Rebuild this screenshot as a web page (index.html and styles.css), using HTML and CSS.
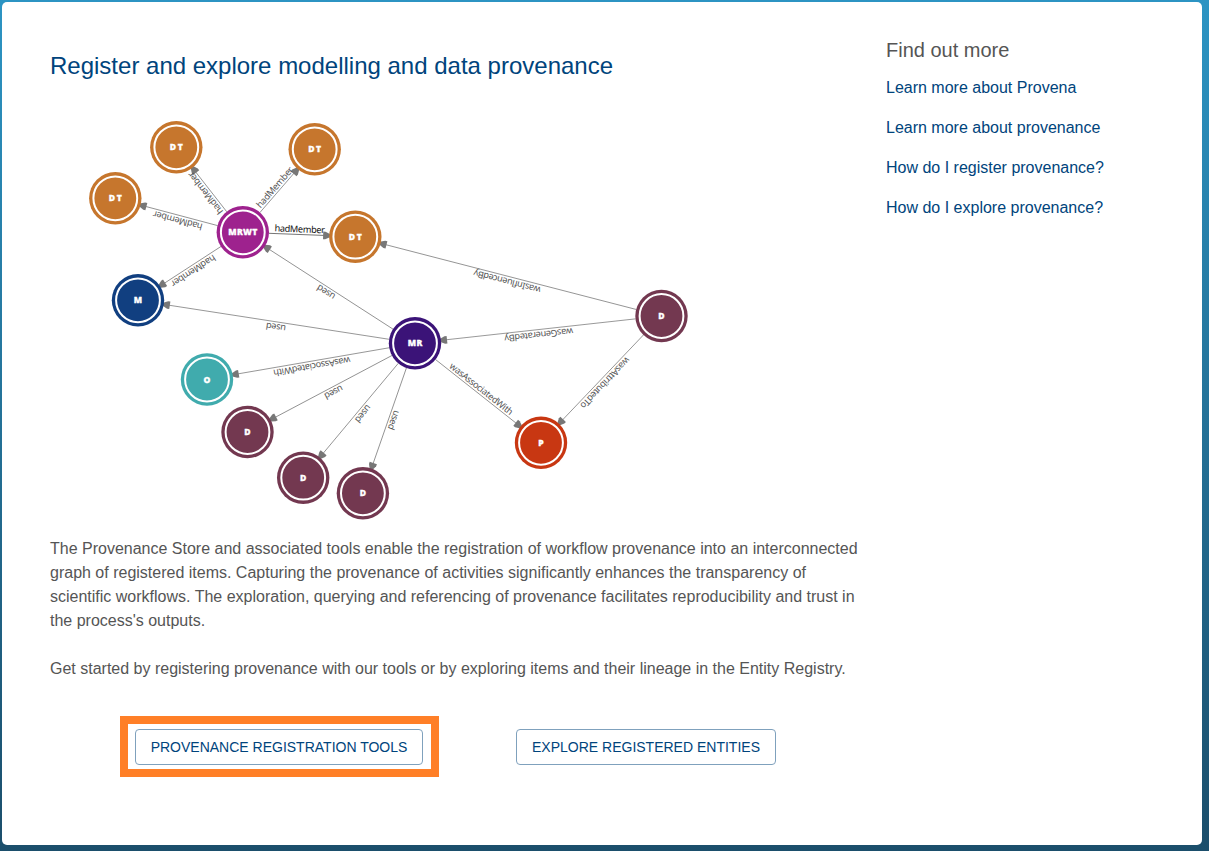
FILE: index.html
```html
<!DOCTYPE html>
<html lang="en">
<head>
<meta charset="utf-8">
<title>Provenance Store</title>
<link rel="stylesheet" href="styles.css">
</head>
<body>
<div class="card">
  <main class="main">
    <h1 class="title">Register and explore modelling and data provenance</h1>
    <svg class="graph" viewBox="50 110 680 420" width="680" height="420">
      <defs>
        <g id="node"><circle r="26.2"/><circle class="ring" r="21.9"/></g>
        <path id="tip" d="M-32.2 -3.8L-30 -3.8L-22 0L-30 3.8L-32.2 3.8z"/>
      </defs>
      <g class="edges">
        <g transform="translate(242.8 232.3) rotate(-128)"><path d="M26 0H80"/><use href="#tip" x="107.9"/><text x="54" y="-2.2" textLength="51">hadMember</text></g>
        <g transform="translate(242.8 232.3) rotate(-49.1)"><path d="M26 0H82"/><use href="#tip" x="109.8"/><text x="55" y="-2.2" textLength="51">hadMember</text></g>
        <g transform="translate(242.8 232.3) rotate(-165.1)"><path d="M26 0H104"/><use href="#tip" x="132"/><text x="66" y="-2.2" textLength="51">hadMember</text></g>
        <g class="strong" transform="translate(242.8 232.3) rotate(2.2)"><path d="M26 0H85"/><use href="#tip" x="112.6"/><text x="56.8" y="-2.2" textLength="50.5">hadMember</text></g>
        <g transform="translate(242.8 232.3) rotate(147)"><path d="M26 0H97"/><use href="#tip" x="124.9"/><text x="62.5" y="-2.2" textLength="51">hadMember</text></g>
        <g transform="translate(415 343.3) rotate(-147.2)"><path d="M26 0H177"/><use href="#tip" x="204.9"/><text x="102.5" y="-2.2" textLength="20">used</text></g>
        <g transform="translate(415 343.3) rotate(-171.2)"><path d="M26 0H252"/><use href="#tip" x="280.3"/><text x="140" y="-2.2" textLength="20">used</text></g>
        <g transform="translate(415 343.3) rotate(170.2)"><path d="M26 0H183"/><use href="#tip" x="211.1"/><text x="105.5" y="-2.2" textLength="78">wasAssociatedWith</text></g>
        <g transform="translate(415 343.3) rotate(152.1)"><path d="M26 0H161"/><use href="#tip" x="189.5"/><text x="94.8" y="-2.2" textLength="20">used</text></g>
        <g transform="translate(415 343.3) rotate(129.85)"><path d="M26 0H147"/><use href="#tip" x="174.8"/><text x="87.4" y="-2.2" textLength="20">used</text></g>
        <g transform="translate(415 343.3) rotate(109.2)"><path d="M26 0H131"/><use href="#tip" x="158.9"/><text x="79.5" y="-2.2" textLength="20">used</text></g>
        <g transform="translate(415 343.3) rotate(38.3)"><path d="M26 0H132"/><use href="#tip" x="160.5"/><text x="80.3" y="-2.2" textLength="78">wasAssociatedWith</text></g>
        <g transform="translate(661.5 316) rotate(-165.5)"><path d="M26 0H288"/><use href="#tip" x="316.3"/><text x="158.2" y="-2.2" textLength="69">wasInfluencedBy</text></g>
        <g transform="translate(661.5 316) rotate(173.7)"><path d="M26 0H220"/><use href="#tip" x="248"/><text x="124" y="-2.2" textLength="69">wasGeneratedBy</text></g>
        <g transform="translate(661.5 316) rotate(133.6)"><path d="M26 0H147"/><use href="#tip" x="174.8"/><text x="87.4" y="-2.2" textLength="67">wasAttributedTo</text></g>
      </g>
      <g class="nodes">
        <g class="template" transform="translate(176.3 147.3)"><use href="#node"/><text y="3" textLength="13">DT</text></g>
        <g class="template" transform="translate(314.7 149.3)"><use href="#node"/><text y="3" textLength="13">DT</text></g>
        <g class="template" transform="translate(115.3 198.3)"><use href="#node"/><text y="3" textLength="13">DT</text></g>
        <g class="template" transform="translate(355.3 236.7)"><use href="#node"/><text y="3" textLength="13">DT</text></g>
        <g class="workflow" transform="translate(242.8 232.3)"><use href="#node"/><text y="3" textLength="29">MRWT</text></g>
        <g class="model" transform="translate(138 300.3)"><use href="#node"/><text y="3">M</text></g>
        <g class="run" transform="translate(415 343.3)"><use href="#node"/><text y="3" textLength="14.5">MR</text></g>
        <g class="organisation" transform="translate(207 379.5)"><use href="#node"/><text y="3">O</text></g>
        <g class="dataset" transform="translate(661.5 316)"><use href="#node"/><text y="3">D</text></g>
        <g class="dataset" transform="translate(247.5 432)"><use href="#node"/><text y="3">D</text></g>
        <g class="dataset" transform="translate(303.2 477.7)"><use href="#node"/><text y="3">D</text></g>
        <g class="dataset" transform="translate(362.9 493.3)"><use href="#node"/><text y="3">D</text></g>
        <g class="person" transform="translate(541 442.8)"><use href="#node"/><text y="3">P</text></g>
      </g>
    </svg>
    <p class="copy">The Provenance Store and associated tools enable the registration of workflow provenance into an interconnected<br>graph of registered items. Capturing the provenance of activities significantly enhances the transparency of<br>scientific workflows. The exploration, querying and referencing of provenance facilitates reproducibility and trust in<br>the process's outputs.</p>
    <p class="copy">Get started by registering provenance with our tools or by exploring items and their lineage in the Entity Registry.</p>
    <div class="actions">
      <div class="highlight"><button class="button tools">PROVENANCE REGISTRATION TOOLS</button></div>
      <button class="button entities">EXPLORE REGISTERED ENTITIES</button>
    </div>
  </main>
  <aside class="more">
    <h2 class="more-title">Find out more</h2>
    <a class="link">Learn more about Provena</a>
    <a class="link">Learn more about provenance</a>
    <a class="link">How do I register provenance?</a>
    <a class="link">How do I explore provenance?</a>
  </aside>
</div>
</body>
</html>
```
FILE: styles.css
```css
* { box-sizing: border-box; }
body {
  margin: 0;
  height: 851px;
  padding: 2px 7px 6px 2px;
  background: linear-gradient(#2c94c3, #1b4e6b);
  font-family: "Liberation Sans", Arial, sans-serif;
  font-size: 16px;
  line-height: 24px;
  color: #555;
  overflow: hidden;
}
.card {
  display: flex;
  height: 843px;
  padding: 36px 48px 0;
  background: #fff;
  border-radius: 5px;
}
.main { width: 836px; flex: none; }
.title {
  margin: 12px 0 28px;
  font-size: 24px;
  font-weight: 400;
  line-height: 32px;
  color: #00447c;
}
.graph { display: block; margin-bottom: 7px; }
.copy { margin: 0 0 24px; white-space: nowrap; }
.actions { display: flex; align-items: center; gap: 77px; margin: 35px 0 0 70px; }
.highlight {
  width: 319px;
  height: 61px;
  padding: 5px 7px;
  border: 8px solid #ff7f27;
}
.button {
  display: block;
  height: 36px;
  padding: 0;
  border: 1px solid #7fa1bd;
  border-radius: 4px;
  background: #fff;
  font: 14px/24px "Liberation Sans", Arial, sans-serif;
  white-space: nowrap;
  color: #00447c;
}
.tools { width: 288px; }
.entities { width: 260px; }
.more { display: flex; flex-direction: column; white-space: nowrap; }
.more-title {
  margin: 0 0 14px;
  font-size: 20px;
  font-weight: 400;
  line-height: 24px;
}
.link { margin-bottom: 16px; color: #00447c; }
.graph text { text-anchor: middle; }
.edges path { stroke: #858585; stroke-width: 0.8; }
.edges use { fill: #777; }
#tip { stroke: none; }
.edges text { font: 9.2px "Noto Sans", sans-serif; fill: #555; }
.edges .strong text { fill: #111; }
.edges .strong path { stroke: #555; }
.ring { fill: none; stroke: #fff; stroke-width: 2; }
.nodes text {
  font: 900 8.6px "Noto Sans", sans-serif;
  fill: #fff;
  stroke: #fff;
  stroke-width: 0.3;
}
.template { fill: #c6762d; }
.workflow { fill: #9e228e; }
.model { fill: #113f80; }
.run { fill: #3b1378; }
.organisation { fill: #40abad; }
.dataset { fill: #733850; }
.person { fill: #c83712; }
```
